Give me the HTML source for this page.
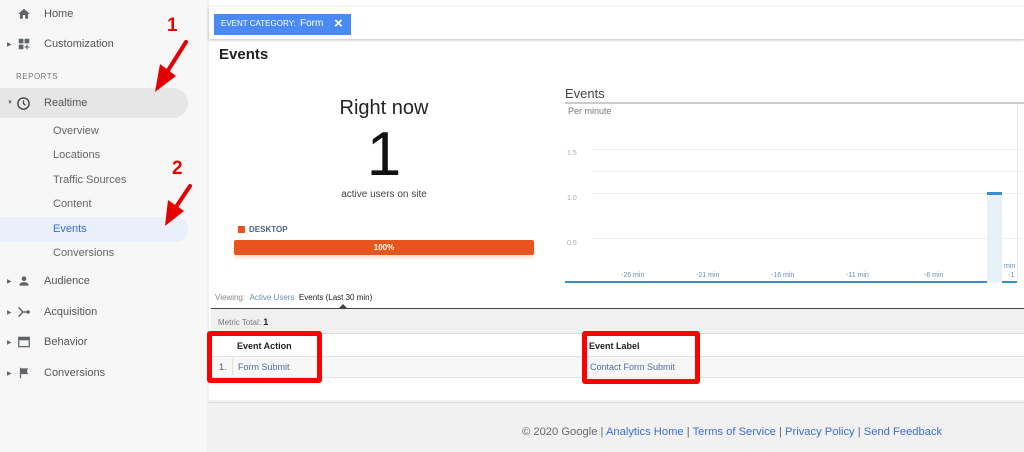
<!DOCTYPE html>
<html><head><style>
*{margin:0;padding:0;box-sizing:border-box}
body{width:1024px;height:452px;overflow:hidden;background:#f1f1f1;font-family:"Liberation Sans",sans-serif;position:relative}
.a{position:absolute;white-space:nowrap}
.side{position:absolute;left:0;top:0;width:207px;height:452px;background:#f7f7f7}
.nav{font-size:11px;color:#555}
.sub{font-size:11px;color:#666;left:53px}
.tri{font-size:6px;color:#666;left:7px}
.ic{left:17px;width:14px;height:14px;fill:#5f6368}
</style></head><body>
<div class="side"></div>
<svg class="a ic" style="top:7px" viewBox="0 0 24 24"><path d="M10 20v-6h4v6h5v-8h3L12 3 2 12h3v8z"/></svg>
<div class="a nav" style="left:44px;top:8px">Home</div>
<div class="a tri" style="top:41px">▶</div>
<svg class="a ic" style="top:37px" viewBox="0 0 24 24"><path d="M3 3h8v8H3zM13 3h8v8h-8zM3 13h8v8H3zM16 13h2v3h3v2h-3v3h-2v-3h-3v-2h3z"/></svg>
<div class="a nav" style="left:44px;top:38px">Customization</div>
<div class="a" style="left:16px;top:72px;font-size:8px;color:#777;letter-spacing:.5px">REPORTS</div>
<div class="a" style="left:0;top:88px;width:188px;height:30px;background:#e6e6e6;border-radius:0 15px 15px 0"></div>
<div class="a tri" style="top:100px">▼</div>
<svg class="a" style="left:16px;top:96px;width:15px;height:15px" viewBox="0 0 24 24"><circle cx="12" cy="12" r="9" fill="none" stroke="#444" stroke-width="2.2"/><path d="M12 7v5l3 3" fill="none" stroke="#444" stroke-width="2"/></svg>
<div class="a nav" style="left:44px;top:97px">Realtime</div>
<div class="a sub" style="top:125px">Overview</div>
<div class="a sub" style="top:149px">Locations</div>
<div class="a sub" style="top:174px">Traffic Sources</div>
<div class="a sub" style="top:198px">Content</div>
<div class="a" style="left:0;top:217px;width:188px;height:25px;background:#e9f0fb;border-radius:0 12px 12px 0"></div>
<div class="a sub" style="top:223px;color:#3b6fd0">Events</div>
<div class="a sub" style="top:247px">Conversions</div>
<div class="a tri" style="top:278px">▶</div>
<svg class="a ic" style="top:274px" viewBox="0 0 24 24"><circle cx="12" cy="8" r="4"/><path d="M4 20c0-4 4-6 8-6s8 2 8 6z"/></svg>
<div class="a nav" style="left:44px;top:275px">Audience</div>
<div class="a tri" style="top:309px">▶</div>
<svg class="a ic" style="top:305px" viewBox="0 0 24 24"><path d="M3 4l7 8-7 8M10 12h8" fill="none" stroke="#5f6368" stroke-width="2.5"/><circle cx="19" cy="12" r="3"/></svg>
<div class="a nav" style="left:44px;top:306px">Acquisition</div>
<div class="a tri" style="top:339px">▶</div>
<svg class="a ic" style="top:335px" viewBox="0 0 24 24"><rect x="3" y="4" width="18" height="16" fill="none" stroke="#5f6368" stroke-width="2.2"/><rect x="3" y="4" width="18" height="5"/></svg>
<div class="a nav" style="left:44px;top:336px">Behavior</div>
<div class="a tri" style="top:370px">▶</div>
<svg class="a ic" style="top:366px" viewBox="0 0 24 24"><path d="M5 3h2v18H5zM7 4h12l-2 5 2 5H7z"/></svg>
<div class="a nav" style="left:44px;top:367px">Conversions</div>
<div class="a" style="left:167px;top:15px;color:#e00;font-weight:bold;font-size:19px;text-shadow:1px 1px 0 #fff">1</div>
<div class="a" style="left:172px;top:158px;color:#e00;font-weight:bold;font-size:19px;text-shadow:1px 1px 0 #fff">2</div>
<svg class="a" style="left:0;top:0;width:207px;height:260px" viewBox="0 0 207 260">
<path d="M186 42L167 72" stroke="#e30000" stroke-width="4" stroke-linecap="round"/>
<path d="M155 92L160 64L176 76z" fill="#e30000"/>
<path d="M190 186L176 207" stroke="#e30000" stroke-width="4" stroke-linecap="round"/>
<path d="M165 226L168 200L184 211z" fill="#e30000"/>
</svg>
<div class="a" style="left:209px;top:0;width:815px;height:400px;background:#fff"></div>
<div class="a" style="left:209px;top:7px;width:815px;height:32px;background:#fff;box-shadow:0 1px 3px rgba(0,0,0,.25)"></div>
<div class="a" style="left:214px;top:14px;width:137px;height:21px;background:#4a8af4;color:#fff"></div>
<div class="a" style="left:221px;top:19px;font-size:8px;color:#fff">EVENT CATEGORY:</div>
<div class="a" style="left:300px;top:18px;font-size:10px;color:#fff">Form</div>
<div class="a" style="left:334px;top:15px;font-size:15px;color:#fff;font-weight:bold">×</div>
<div class="a" style="left:219px;top:46px;font-size:15px;font-weight:bold;color:#222">Events</div>
<div class="a" style="left:284px;top:97px;width:200px;text-align:center;font-size:20px;color:#222">Right now</div>
<div class="a" style="left:284px;top:120px;width:200px;text-align:center;font-size:62px;color:#111;line-height:70px">1</div>
<div class="a" style="left:284px;top:189px;width:200px;text-align:center;font-size:10px;color:#444">active users on site</div>
<div class="a" style="left:238px;top:226px;width:7px;height:7px;background:#e8541d"></div>
<div class="a" style="left:249px;top:225px;font-size:8px;font-weight:bold;color:#4a6785">DESKTOP</div>
<div class="a" style="left:234px;top:240px;width:300px;height:15px;background:#e8541d;border-radius:2px;color:#fff;font-size:8px;font-weight:bold;text-align:center;line-height:15px;box-shadow:0 3px 3px #fbe1d6">100%</div>
<div class="a" style="left:565px;top:86px;font-size:13px;color:#444">Events</div>
<div class="a" style="left:565px;top:102px;width:459px;height:2px;background:#ccc"></div>
<div class="a" style="left:568px;top:106px;font-size:9px;color:#777">Per minute</div>
<div class="a" style="left:567px;top:150px;font-size:7px;color:#aaa">1.5</div>
<div class="a" style="left:567px;top:195px;font-size:7px;color:#aaa">1.0</div>
<div class="a" style="left:567px;top:240px;font-size:7px;color:#aaa">0.5</div>
<div class="a" style="left:592px;top:149px;width:430px;height:1px;background:#eee"></div>
<div class="a" style="left:592px;top:171px;width:430px;height:1px;background:#f2f2f2"></div>
<div class="a" style="left:592px;top:193px;width:430px;height:1px;background:#eee"></div>
<div class="a" style="left:592px;top:238px;width:430px;height:1px;background:#eee"></div>
<div class="a" style="left:1017px;top:104px;width:1px;height:178px;background:#e5e5e5"></div>
<div class="a" style="left:987px;top:192px;width:15px;height:90px;background:#e6f2f8"></div>
<div class="a" style="left:987px;top:192px;width:15px;height:3px;background:#3a8fc8"></div>
<div class="a" style="left:565px;top:281px;width:422px;height:2px;background:#3a8fc8"></div>
<div class="a" style="left:1002px;top:281px;width:15px;height:2px;background:#3a8fc8"></div>
<div class="a" style="left:621px;top:272px;font-size:7px;color:#6a8cb0">-26 min</div>
<div class="a" style="left:696px;top:272px;font-size:7px;color:#6a8cb0">-21 min</div>
<div class="a" style="left:771px;top:272px;font-size:7px;color:#6a8cb0">-16 min</div>
<div class="a" style="left:846px;top:272px;font-size:7px;color:#6a8cb0">-11 min</div>
<div class="a" style="left:924px;top:272px;font-size:7px;color:#6a8cb0">-6 min</div>
<div class="a" style="left:1004px;top:263px;font-size:7px;color:#6a8cb0">min</div>
<div class="a" style="left:1008px;top:272px;font-size:7px;color:#6a8cb0">-1</div>
<div class="a" style="left:215px;top:293px;font-size:8px;color:#888">Viewing: &nbsp;<span style="color:#6a8cb0">Active Users</span> &nbsp;<span style="color:#222">Events (Last 30 min)</span></div>
<div class="a" style="left:339px;top:304px;width:0;height:0;border-left:4px solid transparent;border-right:4px solid transparent;border-bottom:4px solid #444"></div>
<div class="a" style="left:211px;top:308px;width:813px;height:1px;background:#444"></div>
<div class="a" style="left:211px;top:309px;width:813px;height:25px;background:#f0f0f0;border-bottom:1px solid #ddd"></div>
<div class="a" style="left:218px;top:317px;font-size:8px;color:#777">Metric Total: <b style="color:#222;font-size:9px">1</b></div>
<div class="a" style="left:211px;top:356px;width:813px;height:22px;background:#f7f7f7;border-top:1px solid #e2e2e2;border-bottom:1px solid #e2e2e2"></div>
<div class="a" style="left:237px;top:341px;font-size:9px;font-weight:bold;color:#222">Event Action</div>
<div class="a" style="left:589px;top:341px;font-size:9px;font-weight:bold;color:#222">Event Label</div>
<div class="a" style="left:219px;top:362px;font-size:9px;color:#555">1.</div>
<div class="a" style="left:232px;top:359px;width:1px;height:16px;background:#ddd"></div>
<div class="a" style="left:238px;top:362px;font-size:9px;color:#4a6fa5">Form Submit</div>
<div class="a" style="left:590px;top:362px;font-size:9px;color:#4a6fa5">Contact Form Submit</div>
<div class="a" style="left:207px;top:331px;width:115px;height:52px;border:5px solid #f00;border-radius:3px"></div>
<div class="a" style="left:582px;top:331px;width:118px;height:53px;border:5px solid #f00;border-radius:3px"></div>
<div class="a" style="left:209px;top:402px;width:815px;height:1px;background:#ddd"></div>
<div class="a" style="left:522px;top:426px;font-size:11.2px;color:#666">© 2020 Google | <span style="color:#3b6fd0">Analytics Home</span> | <span style="color:#3b6fd0">Terms of Service</span> | <span style="color:#3b6fd0">Privacy Policy</span> | <span style="color:#3b6fd0">Send Feedback</span></div>
</body></html>
